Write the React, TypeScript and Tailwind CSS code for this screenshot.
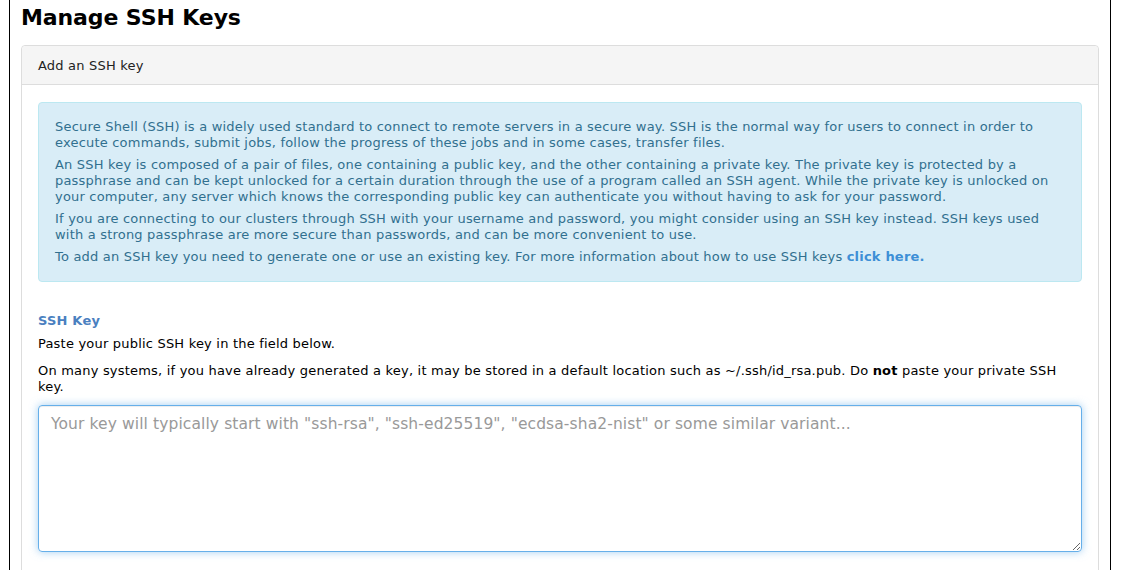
import React from "react";

export default function App() {
  return (
    <div
      className="min-h-[570px] bg-white text-black"
      style={{ fontFamily: '"DejaVu Sans", Verdana, sans-serif' }}
    >
      <div className="ml-[9px] w-[1102px] min-h-[570px] border-x border-black px-[11px]">
        <h1 className="pt-[5px] text-[22px] font-bold leading-[26px] h-[45px] tracking-[-0.1px]">Manage SSH Keys</h1>
        <div className="rounded-[4px] border border-[#dddddd]">
          <div className="h-[39px] flex items-center rounded-t-[4px] border-b border-[#dddddd] bg-[#f5f5f5] px-4 pt-px text-[13px] tracking-[0.2px] text-[#222]">
            Add an SSH key
          </div>
          <div className="px-4 pt-[17px] pb-8 text-[13px] leading-4 tracking-[0.2px]">
            <div className="rounded-[4px] border border-[#bce8f1] bg-[#d9edf7] p-4 text-[#31708f]">
              <p>
                Secure Shell (SSH) is a widely used standard to connect to remote servers in a secure way. SSH is the normal way for users to connect in order to execute commands, submit jobs, follow the progress of these jobs and in some cases, transfer files.
              </p>
              <p className="mt-[6px]">
                An SSH key is composed of a pair of files, one containing a public key, and the other containing a private key. The private key is protected by a passphrase and can be kept unlocked for a certain duration through the use of a program called an SSH agent. While the private key is unlocked on your computer, any server which knows the corresponding public key can authenticate you without having to ask for your password.
              </p>
              <p className="mt-[6px]">
                If you are connecting to our clusters through SSH with your username and password, you might consider using an SSH key instead. SSH keys used with a strong passphrase are more secure than passwords, and can be more convenient to use.
              </p>
              <p className="mt-[6px]">
                To add an SSH key you need to generate one or use an existing key. For more information about how to use SSH keys{" "}
                <a href="#" className="font-bold text-[#3d8fd6]">click here.</a>
              </p>
            </div>
            <div className="mt-[31px] font-bold text-[#4a80c0]">SSH Key</div>
            <p className="mt-[7px]">Paste your public SSH key in the field below.</p>
            <p className="mt-[11px]">
              On many systems, if you have already generated a key, it may be stored in a default location such as ~/.ssh/id_rsa.pub. Do <b>not</b> paste your private SSH key.
            </p>
            <textarea
              autoFocus
              className="mt-[10px] block h-[147px] w-full resize-y rounded-[4px] border border-[#66afe9] px-3 pt-2 pb-[7px] text-[15.5px] leading-5 tracking-[0.1px] text-[#555] outline-none shadow-[inset_0_1px_1px_rgba(0,0,0,0.075),0_0_8px_rgba(102,175,233,0.6)] placeholder:text-[#999]"
              style={{ fontFamily: '"DejaVu Sans", Verdana, sans-serif' }}
              placeholder={'Your key will typically start with "ssh-rsa", "ssh-ed25519", "ecdsa-sha2-nist" or some similar variant...'}
            />
          </div>
        </div>
      </div>
    </div>
  );
}
